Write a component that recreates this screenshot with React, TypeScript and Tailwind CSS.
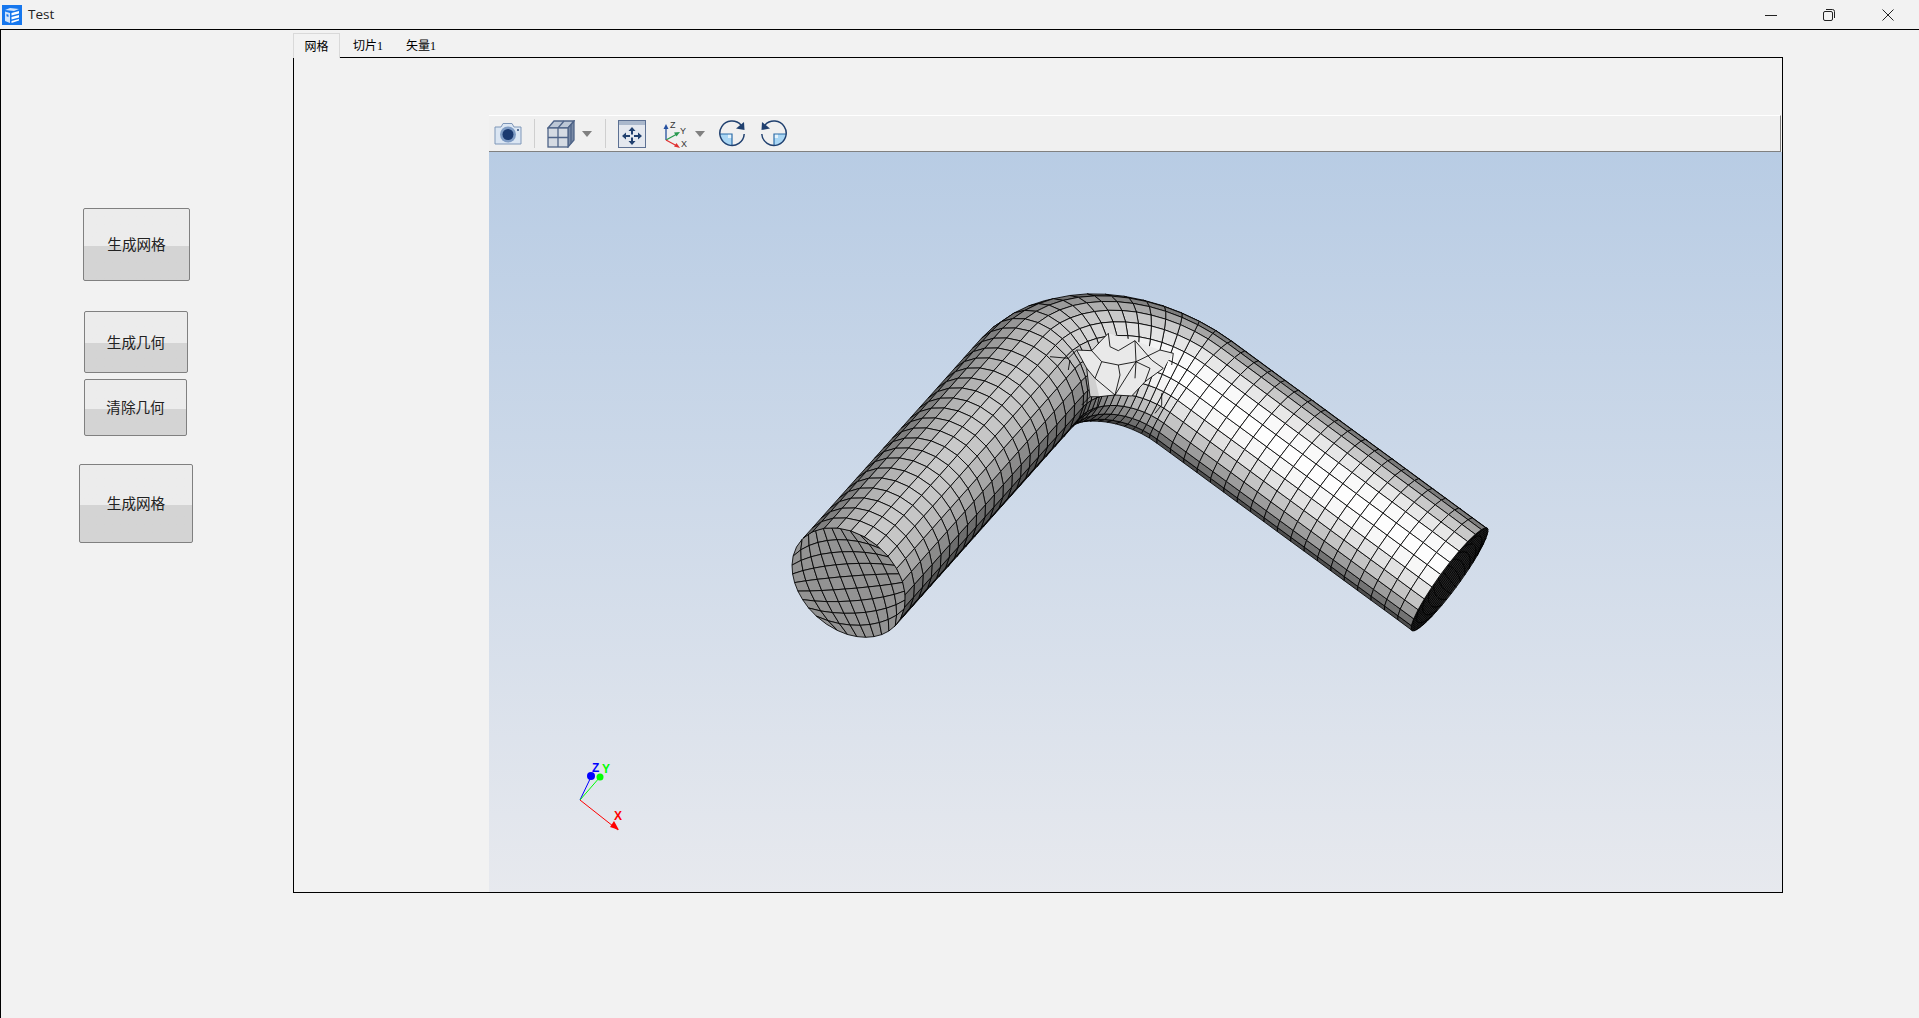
import React, { useMemo } from 'react';

type V3 = [number, number, number];

const add = (a: V3, b: V3, k = 1): V3 => [a[0] + b[0] * k, a[1] + b[1] * k, a[2] + b[2] * k];
const dot = (a: V3, b: V3) => a[0] * b[0] + a[1] * b[1] + a[2] * b[2];
const norm = (a: V3): V3 => {
    const l = Math.sqrt(dot(a, a));
    return [a[0] / l, a[1] / l, a[2] / l];
};
const cross = (a: V3, b: V3): V3 => [
    a[1] * b[2] - a[2] * b[1],
    a[2] * b[0] - a[0] * b[2],
    a[0] * b[1] - a[1] * b[0],
];
const sub = (a: V3, b: V3): V3 => add(a, b, -1);

const LIGHT = norm([0, -0.15, 0.99]);
const shade = (n: V3) => {
    const d = Math.max(0, dot(n, LIGHT));
    const v = Math.min(255, Math.round(255 * (0.25 + 0.75 * Math.pow(d, 1.2))));
    return `rgb(${v},${v},${v})`;
};

type Face = { pts: V3[]; fill: string; depth: number };

// elbow pipe: two straight legs and an arc, projected straight onto the screen
function buildPipe(): Face[] {
    const R = 63.6;
    const r = 128;
    const SEGS = 26;
    const LEN1 = 529;
    const LEN2 = 454;
    const A = norm([0.452, -0.507, -0.733]);
    const B = norm([0.796, 0.584, 0.157]);
    const P0: V3 = [848.7, 582.5, 0];
    const I = add(P0, A, LEN1);
    const E = add(I, B, LEN2);
    const theta = Math.acos(dot(A, B));
    const tl = r * Math.tan(theta / 2);
    const S = add(I, A, -tl);
    const Ap = norm(add(B, A, -dot(A, B)));
    const N = norm(cross(A, B));
    const radEnd = norm(add(add([0, 0, 0], A, -Math.sin(theta)), Ap, Math.cos(theta)));

    const stations: { c: V3; rad: V3 }[] = [];
    const leg1 = 20;
    const bend = 14;
    const leg2 = 19;
    for (let i = 0; i < leg1; i++) {
        stations.push({ c: add(P0, A, ((LEN1 - tl) * i) / leg1), rad: Ap });
    }
    for (let i = 0; i <= bend; i++) {
        const a = (theta * i) / bend;
        const c = add(add(S, A, r * Math.sin(a)), Ap, r * (1 - Math.cos(a)));
        const rad = norm(add(add([0, 0, 0], A, -Math.sin(a)), Ap, Math.cos(a)));
        stations.push({ c, rad });
    }
    for (let i = 1; i <= leg2; i++) {
        stations.push({ c: add(add(I, B, tl), B, ((LEN2 - tl) * i) / leg2), rad: radEnd });
    }

    const point = (i: number, j: number): V3 => {
        const st = stations[i];
        const phi = (j / SEGS) * Math.PI * 2 + Math.PI / SEGS;
        return add(add(st.c, N, R * Math.cos(phi)), st.rad, R * Math.sin(phi));
    };

    const faces: Face[] = [];
    for (let i = 0; i < stations.length - 1; i++) {
        for (let j = 0; j < SEGS; j++) {
            const pts = [point(i, j), point(i + 1, j), point(i + 1, j + 1), point(i, j + 1)];
            let n = norm(cross(sub(pts[1], pts[0]), sub(pts[3], pts[0])));
            const mid = pts.reduce((m, p) => add(m, p, 0.25), [0, 0, 0] as V3);
            const center = add(stations[i].c, stations[i + 1].c, 1).map((v) => v / 2) as V3;
            if (dot(n, sub(mid, center)) < 0) n = [-n[0], -n[1], -n[2]];
            if (n[2] <= 0) continue;
            faces.push({ pts, fill: shade(n), depth: mid[2] });
        }
    }

    // the two end faces, square grid squeezed into a disc
    const cap = (c: V3, axis: V3, cells: number, fill: string) => {
        const u = norm(add(N, cross(axis, N), 1));
        const v = norm(cross(axis, u));
        const disc = (a: number, b: number): V3 => {
            const x = a * Math.sqrt(1 - (b * b) / 2);
            const y = b * Math.sqrt(1 - (a * a) / 2);
            return add(add(c, u, R * x), v, R * y);
        };
        for (let i = 0; i < cells; i++) {
            for (let j = 0; j < cells; j++) {
                const a0 = -1 + (2 * i) / cells;
                const a1 = -1 + (2 * (i + 1)) / cells;
                const b0 = -1 + (2 * j) / cells;
                const b1 = -1 + (2 * (j + 1)) / cells;
                faces.push({
                    pts: [disc(a0, b0), disc(a1, b0), disc(a1, b1), disc(a0, b1)],
                    fill,
                    depth: c[2] + 0.5,
                });
            }
        }
    };
    cap(P0, [-A[0], -A[1], -A[2]], 9, '#939393');
    cap(E, B, 12, '#2a2a2a');

    return faces.sort((a, b) => a.depth - b.depth);
}

// irregular free mesh on the outside of the bend, traced by hand
const Z = (x: number, y: number) => `${(1040 + x / 3).toFixed(1)},${(290 + y / 3).toFixed(1)}`;
const patchOutline: [number, number][] = [
    [110, 180], [155, 182], [205, 130], [285, 152], [360, 180], [400, 190], [370, 235],
    [315, 275], [275, 318], [225, 315], [178, 320], [150, 320], [140, 235],
];
const patchLines: [number, number][][] = [
    [[30, 200], [85, 205], [110, 180], [155, 182], [185, 215], [235, 225], [288, 215]],
    [[110, 180], [140, 235], [150, 320], [125, 345]],
    [[155, 182], [185, 150], [205, 130], [210, 170], [235, 182], [285, 152]],
    [[285, 152], [288, 215], [360, 180], [400, 190]],
    [[285, 152], [335, 210], [370, 235], [315, 275]],
    [[288, 215], [330, 235], [315, 275]],
    [[288, 215], [225, 315], [178, 320], [150, 320]],
    [[185, 215], [165, 265], [225, 315], [275, 318], [315, 275]],
    [[235, 225], [240, 255], [225, 315]],
    [[288, 215], [285, 265]],
    [[165, 265], [140, 235]],
    [[90, 210], [85, 240]],
    [[400, 190], [395, 225]],
    [[365, 310], [365, 345], [345, 370]],
    [[178, 320], [170, 355], [120, 385]],
];

const PipeMesh = () => {
    const faces = useMemo(buildPipe, []);
    return (
        <svg className="absolute inset-0" width={1293} height={740} viewBox="489 152 1293 740">
            {faces.map((f, i) => (
                <polygon
                    key={i}
                    points={f.pts.map((p) => `${p[0].toFixed(1)},${p[1].toFixed(1)}`).join(' ')}
                    fill={f.fill}
                    stroke="#000"
                    strokeWidth={0.85}
                    strokeLinejoin="round"
                />
            ))}
            <polygon points={patchOutline.map((p) => Z(p[0], p[1])).join(' ')} fill="#e9e9e9" />
            <polygon points={[Z(140, 235), Z(165, 265), Z(178, 320), Z(150, 320)].join(' ')} fill="#d0d0d0" />
            {patchLines.map((l, i) => (
                <polyline key={i} points={l.map((p) => Z(p[0], p[1])).join(' ')} fill="none" stroke="#000" strokeWidth={0.85} />
            ))}
            {/* orientation triad */}
            <line x1={580} y1={800} x2={591} y2={777} stroke="#0000ff" strokeWidth={1} />
            <line x1={580} y1={800} x2={600} y2={777} stroke="#00ff00" strokeWidth={1} />
            <line x1={580} y1={800} x2={618} y2={830} stroke="#ff0000" strokeWidth={1} />
            <circle cx={591} cy={776} r={4} fill="#0000ff" />
            <circle cx={600} cy={777} r={3.5} fill="#00ff00" />
            <polygon points="619,830 610,827 614,821" fill="#ff0000" />
            <text x={592} y={772} fontSize={12} fontWeight={700} fill="#0000ff" fontFamily="Liberation Sans">Z</text>
            <text x={602} y={773} fontSize={12} fontWeight={700} fill="#00ff00" fontFamily="Liberation Sans">Y</text>
            <text x={614} y={820} fontSize={12} fontWeight={700} fill="#ff0000" fontFamily="Liberation Sans">X</text>
        </svg>
    );
};

const AppLogo = () => (
    <svg width={20} height={20} viewBox="0 0 20 20" className="shrink-0">
        <rect width={20} height={20} fill="#1677ee" />
        <path d="M3 5 L8 3 L17 4 L12 6 Z" fill="#cfe3fb" />
        <path d="M3 6.5 L8 8 V18 L3 16 Z" fill="#cfe3fb" />
        <path d="M9.5 8 L17 6 V8.5 L9.5 10.5 Z M9.5 12 L17 10 V12.5 L9.5 14.5 Z M9.5 16 L17 14 V15.5 L9.5 18 Z" fill="#ffffff" />
        <path d="M4.5 9 L6.5 9.7 V12 L4.5 11.3 Z" fill="#1677ee" />
    </svg>
);

const WinButtons = () => (
    <div className="flex items-center">
        <svg width={12} height={12} viewBox="0 0 12 12" className="mr-[46px]">
            <line x1={0} y1={6.5} x2={12} y2={6.5} stroke="#222" strokeWidth={1} />
        </svg>
        <svg width={12} height={12} viewBox="0 0 12 12" className="mr-[47px]">
            <rect x={0.5} y={2.5} width={9} height={9} rx={1.5} fill="none" stroke="#222" strokeWidth={1} />
            <path d="M3 0.5 H9.5 A2 2 0 0 1 11.5 2.5 V9" fill="none" stroke="#222" strokeWidth={1} />
        </svg>
        <svg width={12} height={12} viewBox="0 0 12 12" className="mr-[25px]">
            <path d="M0.5 0.5 L11.5 11.5 M11.5 0.5 L0.5 11.5" stroke="#222" strokeWidth={1} />
        </svg>
    </div>
);

const Caret = ({ className }: { className: string }) => (
    <svg width={10} height={6} viewBox="0 0 10 6" className={className}>
        <polygon points="0,0 10,0 5,6" fill="#808080" />
    </svg>
);

const Divider = ({ className }: { className: string }) => <div className={`w-px h-[29px] bg-[#cfcfcf] ${className}`} />;

const CameraIcon = () => (
    <svg width={28} height={23} viewBox="0 0 28 23" className="ml-[5px]">
        <path d="M1 5 H7 L9 1.5 H18 L20 5 H27 V22 H1 Z" fill="#dbe6f3" stroke="#7f97b8" strokeLinejoin="round" />
        <circle cx={14} cy={12.5} r={8} fill="#7f9cc4" />
        <circle cx={14} cy={12.5} r={5.5} fill="#1b3a70" />
        <rect x={23} y={7} width={2} height={2} fill="#5a7297" />
    </svg>
);

const CubeIcon = () => (
    <svg width={28} height={28} viewBox="0 0 28 28" className="ml-[12px]">
        <path d="M1 8 L7 1 H27 L21 8 Z" fill="#bcc7d6" stroke="#4f6488" strokeWidth={1.3} />
        <path d="M21 8 L27 1 V20 L21 27 Z" fill="#7a8ba6" stroke="#4f6488" strokeWidth={1.3} />
        <rect x={1} y={8} width={20} height={19} fill="#d5dbe3" stroke="#4f6488" strokeWidth={1.3} />
        <path d="M11 8 V27 M1 17.5 H21 M11 8 L17 1 M24 4.5 V23.5" stroke="#4f6488" strokeWidth={1.3} fill="none" />
    </svg>
);

const FitIcon = () => (
    <svg width={28} height={28} viewBox="0 0 28 28" className="ml-[12px]">
        <rect x={0.5} y={0.5} width={27} height={27} fill="#e4e8ef" stroke="#5d7193" />
        <rect x={1} y={1} width={26} height={4} fill="#aab8cc" />
        <path d="M14 7 L17.5 11 H15 V14.5 H13 V11 H10.5 Z M14 25 L10.5 21 H13 V17.5 H15 V21 H17.5 Z" fill="#20406f" />
        <path d="M4 16 L8 12.5 V15 H12 V17 H8 V19.5 Z M24 16 L20 19.5 V17 H16 V15 H20 V12.5 Z" fill="#20406f" />
    </svg>
);

const AxesIcon = () => (
    <svg width={24} height={28} viewBox="0 0 24 28" className="ml-[17px]">
        <line x1={3} y1={20} x2={3} y2={7} stroke="#2450a0" strokeWidth={1.3} />
        <polygon points="3,4 0.5,9 5.5,9" fill="#2450a0" />
        <line x1={3} y1={20} x2={14} y2={14} stroke="#2a9a50" strokeWidth={1.3} />
        <polygon points="17,12 11,12.5 13.5,16.5" fill="#2a9a50" />
        <line x1={3} y1={20} x2={14} y2={26} stroke="#e03030" strokeWidth={1.3} />
        <polygon points="17,28 11,26.5 13.5,23" fill="#e03030" />
        <text x={7} y={8} fontSize={9} fill="#333" fontFamily="Liberation Sans">Z</text>
        <text x={17} y={14} fontSize={9} fill="#333" fontFamily="Liberation Sans">Y</text>
        <text x={18} y={27} fontSize={9} fill="#333" fontFamily="Liberation Sans">X</text>
    </svg>
);

// arc runs from the arrow over the top, round the left and the bottom to the right
const RotateIcon = ({ flip, className }: { flip?: boolean; className: string }) => (
    <svg width={27} height={28} viewBox="0 0 27 28" className={className} style={flip ? { transform: 'scaleX(-1)' } : undefined}>
        <path d="M13 14 H1 A12 12 0 0 0 13 26 Z" fill="#a9d6f4" />
        <rect x={9} y={14} width={4} height={4} fill="#e4f3fc" />
        <path d="M1 14 H13 V26" fill="none" stroke="#2b6ca8" strokeWidth={1.2} />
        <path d="M22 5 A12.2 12.2 0 1 0 25.2 14" fill="none" stroke="#20406f" strokeWidth={1.5} />
        <polygon points="25,2 25.5,10 17,8.5" fill="#20406f" />
    </svg>
);

const ViewerToolbar = () => (
    <div className="h-[37px] mr-px flex items-center bg-[#f0f0f0] border-t border-r border-b border-t-white border-r-[#808080] border-b-[#808080] box-border">
        <CameraIcon />
        <Divider className="ml-[12px]" />
        <CubeIcon />
        <Caret className="ml-[7px]" />
        <Divider className="ml-[13px]" />
        <FitIcon />
        <AxesIcon />
        <Caret className="ml-[8px]" />
        <RotateIcon className="ml-[14px]" />
        <RotateIcon flip className="ml-[14px]" />
    </div>
);

const SideButton = ({ label, className }: { label: string; className: string }) => (
    <button className={`flex items-center justify-center rounded-[2px] border border-[#808080] bg-linear-to-b from-[#ececec] from-[52%] to-[#d4d4d4] to-[52%] text-[14.6px] leading-none text-[#222] ${className}`}>
        {label}
    </button>
);

export default function App() {
    return (
        <div className="w-[1919px] h-[1018px] overflow-hidden flex flex-col bg-[#f2f2f2] font-['Noto_Sans_CJK_SC','Liberation_Sans',sans-serif] text-black">
            {/* Title bar */}
            <div className="h-[29px] shrink-0 flex items-center justify-between pl-[2px]">
                <div className="flex items-center gap-[6px]">
                    <AppLogo />
                    <span className="text-[13.5px] font-['Open_Sans',sans-serif] text-[#222]">Test</span>
                </div>
                <WinButtons />
            </div>

            <div className="flex-1 flex border-t border-l border-black">
                {/* Left buttons */}
                <div className="w-[292px] shrink-0 flex flex-col items-start">
                    <SideButton label="生成网格" className="w-[107px] h-[73px] mt-[178px] ml-[82px]" />
                    <SideButton label="生成几何" className="w-[104px] h-[62px] mt-[30px] ml-[83px]" />
                    <SideButton label="清除几何" className="w-[103px] h-[57px] mt-[6px] ml-[83px]" />
                    <SideButton label="生成网格" className="w-[114px] h-[79px] mt-[28px] ml-[78px]" />
                </div>

                {/* Tabs + viewer */}
                <div className="w-[1490px] pt-[3px] flex flex-col">
                    <div className="h-[25px] flex text-[12px] leading-none -mb-px font-['Liberation_Serif','Noto_Sans_CJK_SC',serif]">
                        <div className="relative z-10 w-[47px] h-[25px] flex items-center justify-center bg-[#f2f2f2] border border-b-0 border-[#d9d9d9] font-['Noto_Sans_CJK_SC',sans-serif]">网格</div>
                        <div className="w-[66px] h-[25px] flex items-center pl-[13px]">切片1</div>
                        <div className="w-[46px] h-[25px] flex items-center">矢量1</div>
                    </div>
                    <div className="h-[836px] border border-black pt-[57px] pl-[195px] box-border">
                        <div className="relative h-[777px] flex flex-col">
                            <ViewerToolbar />
                            <div className="relative flex-1 bg-linear-to-b from-[#b8cce4] to-[#e7e9ee]">
                                <PipeMesh />
                            </div>
                        </div>
                    </div>
                </div>
            </div>
        </div>
    );
}
